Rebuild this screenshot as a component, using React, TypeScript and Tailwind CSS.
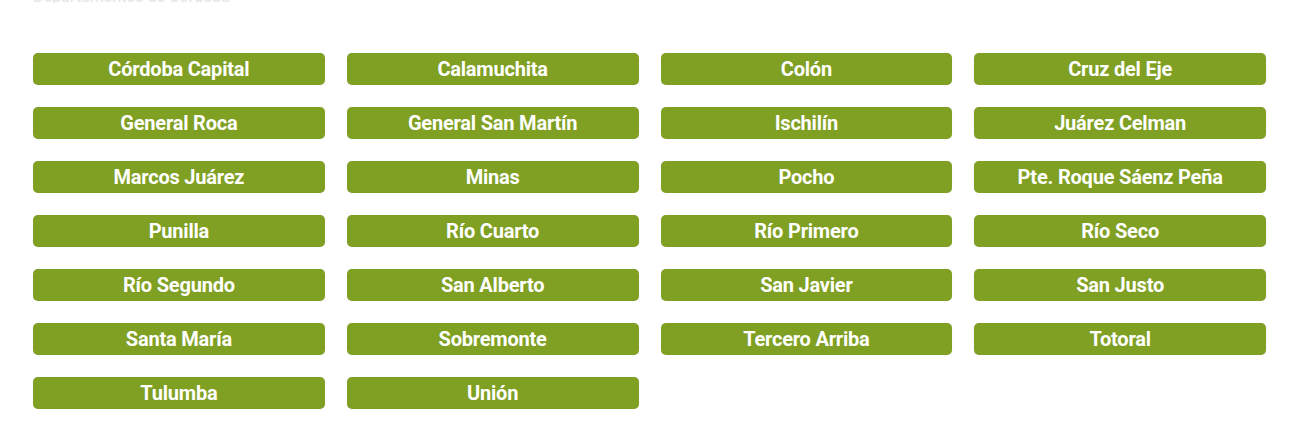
import React from 'react';

const departamentos = [
    'Córdoba Capital', 'Calamuchita', 'Colón', 'Cruz del Eje',
    'General Roca', 'General San Martín', 'Ischilín', 'Juárez Celman',
    'Marcos Juárez', 'Minas', 'Pocho', 'Pte. Roque Sáenz Peña',
    'Punilla', 'Río Cuarto', 'Río Primero', 'Río Seco',
    'Río Segundo', 'San Alberto', 'San Javier', 'San Justo',
    'Santa María', 'Sobremonte', 'Tercero Arriba', 'Totoral',
    'Tulumba', 'Unión'
];

const App: React.FC = () => {
    return (
        <div className="min-h-screen bg-white font-['Roboto',sans-serif]">
            {/* Heading, scrolled mostly out of view */}
            <div className="h-[3px] overflow-hidden px-[33px]">
                <h2 className="mt-[-11px] text-[16px] leading-[16px] font-medium text-[#e8e8e8] whitespace-nowrap">
                    Departamentos de Córdoba
                </h2>
            </div>

            <div className="grid grid-cols-4 gap-x-[22px] gap-y-[22px] pl-[33px] pr-[31px] pt-[50px] pb-8">
                {departamentos.map((d) => (
                    <a
                        key={d}
                        href="#"
                        className="h-[32px] flex items-center justify-center rounded-[5px] bg-[#7fa023] text-white text-[20px] font-bold tracking-[-0.2px] shadow-[0_0_1px_rgba(0,0,0,0.15)]"
                    >
                        {d}
                    </a>
                ))}
            </div>
        </div>
    );
};

export default App;
